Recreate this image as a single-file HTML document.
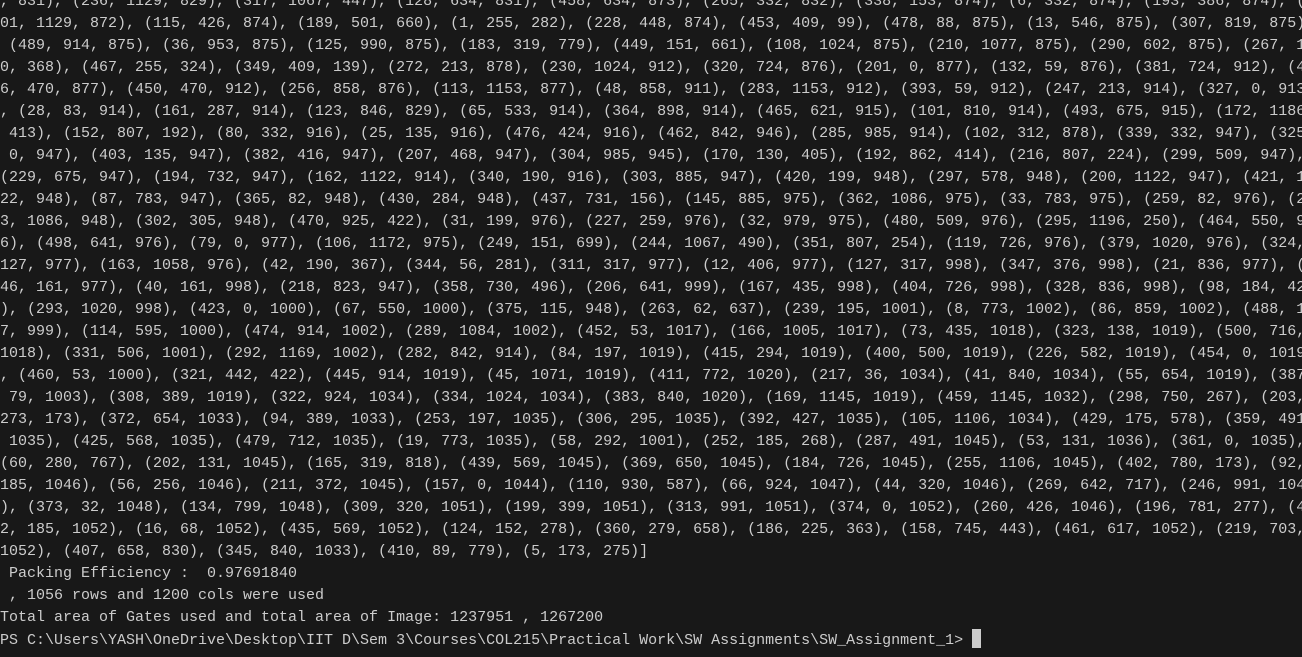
<!DOCTYPE html>
<html><head><meta charset="utf-8"><style>
html,body{margin:0;padding:0;background:#181818;width:1302px;height:657px;overflow:hidden}
pre{margin:0;position:absolute;left:0;top:-9px;font-family:"Liberation Mono",monospace;font-size:15px;line-height:22px;color:#cccccc;white-space:pre}
.cur{display:inline-block;width:9px;height:19px;background:#cccccc;vertical-align:-4px}
</style></head><body><pre>, 831), (236, 1129, 829), (317, 1067, 447), (128, 634, 831), (458, 634, 873), (265, 332, 832), (338, 153, 874), (6, 332, 874), (193, 386, 874), (
01, 1129, 872), (115, 426, 874), (189, 501, 660), (1, 255, 282), (228, 448, 874), (453, 409, 99), (478, 88, 875), (13, 546, 875), (307, 819, 875),
 (489, 914, 875), (36, 953, 875), (125, 990, 875), (183, 319, 779), (449, 151, 661), (108, 1024, 875), (210, 1077, 875), (290, 602, 875), (267, 1
0, 368), (467, 255, 324), (349, 409, 139), (272, 213, 878), (230, 1024, 912), (320, 724, 876), (201, 0, 877), (132, 59, 876), (381, 724, 912), (4
6, 470, 877), (450, 470, 912), (256, 858, 876), (113, 1153, 877), (48, 858, 911), (283, 1153, 912), (393, 59, 912), (247, 213, 914), (327, 0, 913
, (28, 83, 914), (161, 287, 914), (123, 846, 829), (65, 533, 914), (364, 898, 914), (465, 621, 915), (101, 810, 914), (493, 675, 915), (172, 1186
 413), (152, 807, 192), (80, 332, 916), (25, 135, 916), (476, 424, 916), (462, 842, 946), (285, 985, 914), (102, 312, 878), (339, 332, 947), (325
 0, 947), (403, 135, 947), (382, 416, 947), (207, 468, 947), (304, 985, 945), (170, 130, 405), (192, 862, 414), (216, 807, 224), (299, 509, 947),
(229, 675, 947), (194, 732, 947), (162, 1122, 914), (340, 190, 916), (303, 885, 947), (420, 199, 948), (297, 578, 948), (200, 1122, 947), (421, 1
22, 948), (87, 783, 947), (365, 82, 948), (430, 284, 948), (437, 731, 156), (145, 885, 975), (362, 1086, 975), (33, 783, 975), (259, 82, 976), (2
3, 1086, 948), (302, 305, 948), (470, 925, 422), (31, 199, 976), (227, 259, 976), (32, 979, 975), (480, 509, 976), (295, 1196, 250), (464, 550, 9
6), (498, 641, 976), (79, 0, 977), (106, 1172, 975), (249, 151, 699), (244, 1067, 490), (351, 807, 254), (119, 726, 976), (379, 1020, 976), (324,
127, 977), (163, 1058, 976), (42, 190, 367), (344, 56, 281), (311, 317, 977), (12, 406, 977), (127, 317, 998), (347, 376, 998), (21, 836, 977), (
46, 161, 977), (40, 161, 998), (218, 823, 947), (358, 730, 496), (206, 641, 999), (167, 435, 998), (404, 726, 998), (328, 836, 998), (98, 184, 42
), (293, 1020, 998), (423, 0, 1000), (67, 550, 1000), (375, 115, 948), (263, 62, 637), (239, 195, 1001), (8, 773, 1002), (86, 859, 1002), (488, 1
7, 999), (114, 595, 1000), (474, 914, 1002), (289, 1084, 1002), (452, 53, 1017), (166, 1005, 1017), (73, 435, 1018), (323, 138, 1019), (500, 716,
1018), (331, 506, 1001), (292, 1169, 1002), (282, 842, 914), (84, 197, 1019), (415, 294, 1019), (400, 500, 1019), (226, 582, 1019), (454, 0, 1019
, (460, 53, 1000), (321, 442, 422), (445, 914, 1019), (45, 1071, 1019), (411, 772, 1020), (217, 36, 1034), (41, 840, 1034), (55, 654, 1019), (387
 79, 1003), (308, 389, 1019), (322, 924, 1034), (334, 1024, 1034), (383, 840, 1020), (169, 1145, 1019), (459, 1145, 1032), (298, 750, 267), (203,
273, 173), (372, 654, 1033), (94, 389, 1033), (253, 197, 1035), (306, 295, 1035), (392, 427, 1035), (105, 1106, 1034), (429, 175, 578), (359, 491
 1035), (425, 568, 1035), (479, 712, 1035), (19, 773, 1035), (58, 292, 1001), (252, 185, 268), (287, 491, 1045), (53, 131, 1036), (361, 0, 1035),
(60, 280, 767), (202, 131, 1045), (165, 319, 818), (439, 569, 1045), (369, 650, 1045), (184, 726, 1045), (255, 1106, 1045), (402, 780, 173), (92,
185, 1046), (56, 256, 1046), (211, 372, 1045), (157, 0, 1044), (110, 930, 587), (66, 924, 1047), (44, 320, 1046), (269, 642, 717), (246, 991, 104
), (373, 32, 1048), (134, 799, 1048), (309, 320, 1051), (199, 399, 1051), (313, 991, 1051), (374, 0, 1052), (260, 426, 1046), (196, 781, 277), (4
2, 185, 1052), (16, 68, 1052), (435, 569, 1052), (124, 152, 278), (360, 279, 658), (186, 225, 363), (158, 745, 443), (461, 617, 1052), (219, 703,
1052), (407, 658, 830), (345, 840, 1033), (410, 89, 779), (5, 173, 275)]
 Packing Efficiency :  0.97691840
 , 1056 rows and 1200 cols were used
Total area of Gates used and total area of Image: 1237951 , 1267200
PS C:\Users\YASH\OneDrive\Desktop\IIT D\Sem 3\Courses\COL215\Practical Work\SW Assignments\SW_Assignment_1&gt; <span class="cur"></span></pre></body></html>
